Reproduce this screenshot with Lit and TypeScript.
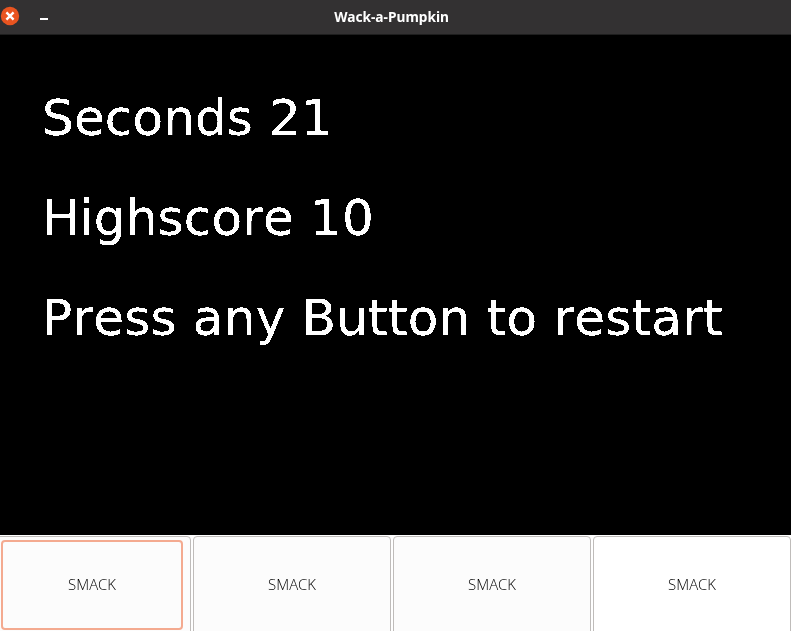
import { LitElement, html, css } from "lit";
import { customElement, property } from "lit/decorators.js";

@customElement("title-bar")
class TitleBar extends LitElement {
  static styles = css`
    :host { box-sizing: border-box; flex: none; height: 35px; display: grid; grid-template-columns: 60px 1fr 67px;
      background: #333132; border-bottom: 1px solid #1e1e1e; }
    .controls { display: block; width: 60px; height: 34px; }
    .title { text-align: center; white-space: nowrap; color: #fff; font: bold 14px/34px "Noto Sans", sans-serif; }
    .label { display: inline-block; transform: scaleX(0.98); }
  `;
  render() {
    return html`
      <svg class="controls" viewBox="0 0 60 34">
        <circle cx="10" cy="16" r="9.2" fill="#e95420" />
        <path d="M6.4 12.4L13.6 19.6M13.6 12.4L6.4 19.6" stroke="#fff" stroke-width="2.4" />
        <rect x="40" y="18" width="8" height="2" fill="#fff" />
      </svg>
      <div class="title"><span class="label">Wack-a-Pumpkin</span></div>
    `;
  }
}

@customElement("smack-button")
class SmackButton extends LitElement {
  @property({ type: Boolean, reflect: true }) focused = false;
  @property({ type: Boolean, reflect: true }) bright = false;
  static styles = css`
    :host { display: block; }
    button { box-sizing: border-box; display: block; width: 198px; height: 110px; margin: 0; padding: 0 0 15px;
      border: 1px solid #bfbcba; border-radius: 4px; background: #fcfcfc; color: #000;
      font: 300 15px/20px "Open Sans", "Noto Sans", sans-serif; position: relative; }
    :host([bright]) button { background: #fff; }
    .label { display: inline-block; transform: scaleX(0.995); }
    .ring { position: absolute; box-sizing: border-box; left: 7px; right: 7px; top: 3px; height: 90px;
      border: 2px solid #f4aa90; border-radius: 4px; }
  `;
  render() {
    return html`<button><span class="label">SMACK</span>${this.focused ? html`<span class="ring"></span>` : ""}</button>`;
  }
}

@customElement("app-root")
class AppRoot extends LitElement {
  static styles = css`
    :host { display: flex; flex-direction: column; width: 791px; height: 631px; overflow: hidden; background: #fff; }
    .stage { flex: none; box-sizing: border-box; height: 500px; padding: 33px 0 0 42px; background: #000; color: #fff;
      font: 50px/100px "DejaVu Sans", sans-serif; font-kerning: none; white-space: nowrap; filter: brightness(1.3) contrast(20); }
    .seconds { letter-spacing: 0.14px; }
    .score { letter-spacing: 0.17px; }
    .hint { letter-spacing: 0.235px; }
    .buttons { flex: none; display: flex; gap: 2px; margin: 1px 0 0 -7px; }
  `;
  render() {
    return html`
      <title-bar></title-bar>
      <div class="stage">
        <div class="seconds">Seconds 21</div>
        <div class="score">Highscore 10</div>
        <div class="hint">Press any Button to restart</div>
      </div>
      <div class="buttons">
        <smack-button focused></smack-button>
        <smack-button></smack-button>
        <smack-button></smack-button>
        <smack-button bright></smack-button>
      </div>
    `;
  }
}
